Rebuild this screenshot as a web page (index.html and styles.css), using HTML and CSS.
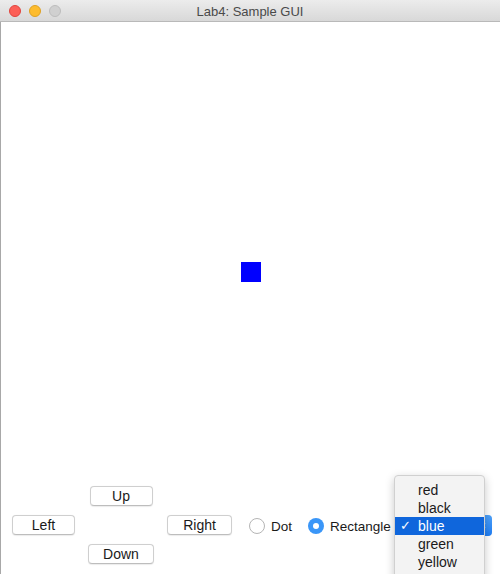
FILE: index.html
```html
<!DOCTYPE html>
<html>
<head>
<meta charset="utf-8">
<title>Lab4: Sample GUI</title>
<link rel="stylesheet" href="styles.css">
</head>
<body>
<div class="window">
  <div class="titlebar">
    <div class="lights">
      <span class="light red"></span>
      <span class="light yellow"></span>
      <span class="light grey"></span>
    </div>
    <div class="title">Lab4: Sample GUI</div>
  </div>
  <div class="canvas">
    <div class="shape"></div>
  </div>
  <div class="controls">
    <div class="dpad">
      <button class="btn up">Up</button>
      <button class="btn left">Left</button>
      <button class="btn right">Right</button>
      <button class="btn down">Down</button>
    </div>
    <label class="radio"><span class="circle"></span>Dot</label>
    <label class="radio checked"><span class="circle"></span>Rectangle</label>
    <div class="combo">
      <span class="combo-arrow">
        <svg width="6" height="11" viewBox="0 0 6 11"><path d="M1 4 L3 2 L5 4 M1 7 L3 9 L5 7" fill="none" stroke="#fff" stroke-width="1.2"/></svg>
      </span>
    </div>
  </div>
  <ul class="popup">
    <li class="item">red</li>
    <li class="item">black</li>
    <li class="item selected"><span class="check">✓</span>blue</li>
    <li class="item">green</li>
    <li class="item">yellow</li>
  </ul>
</div>
</body>
</html>
```

FILE: styles.css
```css
html, body {
  margin: 0;
  padding: 0;
  background: #ffffff;
}
.window {
  position: relative;
  width: 500px;
  height: 574px;
  display: flex;
  flex-direction: column;
  overflow: hidden;
  font-family: "Liberation Sans", Arial, sans-serif;
  color: #1a1a1a;
}
.titlebar {
  position: relative;
  height: 21px;
  flex: none;
  background: linear-gradient(#ececec, #d8d8d8);
  border-bottom: 1px solid #b9b9b9;
  display: flex;
  align-items: center;
  justify-content: center;
}
.lights {
  position: absolute;
  left: 9px;
  top: 5px;
  display: flex;
  gap: 8px;
}
.light {
  width: 12px;
  height: 12px;
  border-radius: 50%;
  box-sizing: border-box;
}
.light.red { background: #fc5f57; border: 1px solid #e0443e; }
.light.yellow { background: #fdbc2e; border: 1px solid #dea123; }
.light.grey { background: #d0d0d0; border: 1px solid #bdbdbd; }
.title {
  font-size: 13px;
  color: #4a4a4a;
  line-height: 21px;
  padding-top: 1px;
}
.canvas {
  position: relative;
  flex: 1;
  border-left: 1px solid #a8a8a8;
}
.shape {
  position: absolute;
  left: 240px;
  top: 240px;
  width: 20px;
  height: 20px;
  background: #0000ff;
}
.controls {
  flex: none;
  display: flex;
  align-items: center;
  padding: 6px 0 10px 11px;
  border-left: 1px solid #a8a8a8;
}
.dpad {
  display: grid;
  grid-template-columns: 63px 66px 65px;
  grid-template-rows: 20px 20px 20px;
  column-gap: 13px;
  row-gap: 9px;
}
.btn {
  box-sizing: border-box;
  height: 20px;
  margin: 0;
  padding: 0;
  background: #ffffff;
  border: 1px solid #cfcfcf;
  border-bottom-color: #bdbdbd;
  border-radius: 4px;
  box-shadow: 0 0.5px 1px rgba(0,0,0,0.08);
  font-family: "Liberation Sans", Arial, sans-serif;
  font-size: 14px;
  color: #1a1a1a;
  line-height: 18px;
}
.up { grid-column: 2; grid-row: 1; width: 63px; justify-self: center; }
.left { grid-column: 1; grid-row: 2; }
.right { grid-column: 3; grid-row: 2; }
.down { grid-column: 2; grid-row: 3; }
.radio {
  display: flex;
  align-items: center;
  gap: 6px;
  font-size: 13.5px;
  color: #1a1a1a;
  margin-left: 17px;
  margin-top: 2px;
}
.radio + .radio { margin-left: 16px; }
.circle {
  box-sizing: border-box;
  width: 16px;
  height: 16px;
  border-radius: 50%;
  border: 1px solid #b5b5b5;
  background: #ffffff;
  position: relative;
}
.checked .circle {
  border: none;
  background: #3a96f8;
}
.checked .circle::after {
  content: "";
  position: absolute;
  left: 5px;
  top: 5px;
  width: 6px;
  height: 6px;
  border-radius: 50%;
  background: #ffffff;
}
.combo {
  margin-left: 6px;
  width: 95px;
  height: 21px;
  box-sizing: border-box;
  border: 1px solid #cfcfcf;
  border-radius: 4px;
  background: #ffffff;
  position: relative;
  margin-top: 1px;
}
.combo-arrow {
  position: absolute;
  right: -1px;
  top: -1px;
  width: 17px;
  height: 21px;
  border-radius: 0 4px 4px 0;
  background: linear-gradient(#4ea2fb, #1f7ef5);
  display: flex;
  align-items: center;
  justify-content: center;
}
.popup {
  position: absolute;
  left: 394px;
  top: 475px;
  width: 91px;
  height: 110px;
  margin: 0;
  padding: 5px 0 0 0;
  list-style: none;
  box-sizing: border-box;
  background: #f3f3f3;
  border: 1px solid #d0d0d0;
  border-radius: 4px 4px 0 0;
  box-shadow: 0 3px 10px rgba(0,0,0,0.22);
}
.item {
  position: relative;
  height: 18px;
  line-height: 18px;
  padding-left: 23px;
  font-size: 14px;
  color: #1a1a1a;
}
.item.selected {
  background: #0f66dc;
  color: #ffffff;
}
.check {
  position: absolute;
  left: 5px;
  top: 0;
  font-size: 13px;
}
```
